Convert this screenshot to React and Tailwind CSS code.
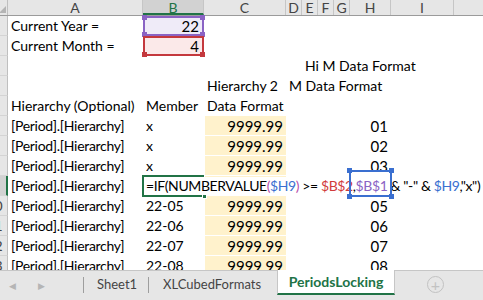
import React from "react";

const FONT = { fontFamily: "Lato, 'Open Sans', sans-serif" };

// column widths A..J (row header is 8px, cut off by the window)
const cols = [
  { key: "A", w: "w-[135px]" },
  { key: "B", w: "w-[61px]" },
  { key: "C", w: "w-[82px]" },
  { key: "D", w: "w-[16px]" },
  { key: "E", w: "w-[16px]" },
  { key: "F", w: "w-[16px]" },
  { key: "G", w: "w-[16px]" },
  { key: "H", w: "w-[41px]" },
  { key: "I", w: "w-[63px]" },
  { key: "J", w: "w-[80px]" },
];

const Handle = ({ className }) => (
  <span className={`absolute w-[5px] h-[5px] ${className}`} />
);

const RowHead = ({ n, active }) => (
  <div
    className={`w-[8px] h-[20px] shrink-0 overflow-hidden flex justify-end border-b border-[#d4d4d4] ${
      active ? "bg-[#d2d2d2] border-r-2 border-r-[#217346]" : "bg-[#e6e6e6] border-r border-r-[#bfbfbf]"
    }`}
  >
    <span className="shrink-0 w-[25px] text-center text-[14px] leading-[20px] text-[#444]">
      {n}
    </span>
  </div>
);

const Yellow = ({ children }) => (
  <div className="w-[82px] h-[20px] shrink-0 bg-[#fff2cc] border-b border-l border-white text-right pr-[3px] leading-[20px] text-[15px]">
    {children}
  </div>
);

const Plain = ({ w, children, right, className = "" }) => (
  <div
    className={`${w} h-[20px] shrink-0 whitespace-nowrap leading-[20px] ${
      right ? "text-right pr-[3px]" : "pl-[3px]"
    } ${className}`}
  >
    {children}
  </div>
);

const DataRow = ({ n, member, code }) => (
  <div className="flex h-[20px]">
    <RowHead n={n} />
    <Plain w="w-[135px]" className="tracking-[-0.3px]">[Period].[Hierarchy]</Plain>
    <Plain w="w-[61px]">{member}</Plain>
    <Yellow>9999.99</Yellow>
    <div className="w-[64px] shrink-0" />
    <Plain w="w-[41px]" right className="text-[15px]">
      {code}
    </Plain>
  </div>
);

export default function App() {
  return (
    <div className="w-[483px] h-[300px] bg-white overflow-hidden text-[14px] text-black" style={FONT}>
      {/* Sheet */}
      <div className="h-[270px] overflow-hidden">
        {/* column headers */}
        <div className="flex h-[16px] border-b border-[#9b9b9b] bg-[#e6e6e6] text-[14px] leading-[15px] text-[#444]">
          <div className="w-[8px] shrink-0 border-r border-[#bfbfbf] relative overflow-hidden">
            <span className="absolute right-[1px] bottom-[2px] w-0 h-0 border-l-[7px] border-l-transparent border-b-[7px] border-b-[#b4b4b4]" />
          </div>
          {cols.map((c) => (
            <div
              key={c.key}
              className={`${c.w} shrink-0 text-center border-r border-[#c6c6c6] ${
                c.key === "B" ? "bg-[#d2d2d2] text-[#217346] border-b-2 border-b-[#217346]" : ""
              }`}
            >
              {c.key}
            </div>
          ))}
        </div>

        {/* row 1 */}
        <div className="flex h-[20px]">
          <RowHead n={1} />
          <Plain w="w-[135px]">Current Year =</Plain>
          <div className="w-[61px] h-[20px] shrink-0 relative bg-[#efebf8] border-2 border-[#8a63c4] text-right pr-[3px] leading-[16px] text-[15px]">
            22
            <Handle className="-left-[3px] -top-[3px] bg-[#8a63c4]" />
            <Handle className="-right-[3px] -top-[3px] bg-[#8a63c4]" />
            <Handle className="-left-[3px] -bottom-[3px] bg-[#8a63c4]" />
            <Handle className="-right-[3px] -bottom-[3px] bg-[#8a63c4]" />
          </div>
        </div>
        {/* row 2 */}
        <div className="flex h-[20px]">
          <RowHead n={2} />
          <Plain w="w-[135px]">Current Month =</Plain>
          <div className="w-[61px] h-[20px] shrink-0 relative bg-[#fbe9e9] border-2 border-[#c4383d] text-right pr-[3px] leading-[16px] text-[15px]">
            4
            <Handle className="-left-[3px] -bottom-[3px] bg-[#c4383d]" />
            <Handle className="-right-[3px] -bottom-[3px] bg-[#c4383d]" />
          </div>
        </div>
        {/* row 3 */}
        <div className="flex h-[20px]">
          <RowHead n={3} />
          <div className="w-[294px] shrink-0" />
          <Plain w="w-[16px]" className="pl-[2px]">Hi M Data Format</Plain>
        </div>
        {/* row 4 */}
        <div className="flex h-[20px]">
          <RowHead n={4} />
          <div className="w-[196px] shrink-0" />
          <Plain w="w-[82px]">Hierarchy 2</Plain>
          <Plain w="w-[16px]" className="pl-[2px]">M Data Format</Plain>
        </div>
        {/* row 5 */}
        <div className="flex h-[20px]">
          <RowHead n={5} />
          <Plain w="w-[135px]">Hierarchy (Optional)</Plain>
          <Plain w="w-[61px]">Member</Plain>
          <Plain w="w-[82px]">Data Format</Plain>
        </div>

        <DataRow n={6} member="x" code="01" />
        <DataRow n={7} member="x" code="02" />
        <DataRow n={8} member="x" code="03" />

        {/* row 9 - cell being edited */}
        <div className="flex h-[20px]">
          <RowHead n={9} active />
          <Plain w="w-[135px]" className="tracking-[-0.3px]">[Period].[Hierarchy]</Plain>
          <div className="w-[61px] h-[20px] shrink-0 relative z-10">
            <span className="absolute -left-[1px] -top-[1px] w-[62px] h-[22px] border-2 border-[#217346]" />
            <span className="absolute right-[-3px] bottom-[-3px] w-[5px] h-[5px] bg-[#217346] border border-white" />
            <span className="absolute left-[1px] top-[1px] h-[18px] bg-white whitespace-nowrap pl-[2px] pr-[4px] leading-[18px] tracking-[-0.4px]">
              =IF(NUMBERVALUE<span className="text-[#b84dab]">(</span>
              <span className="text-[#3a6fd0]">$H9</span>
              <span className="text-[#b84dab]">)</span> &gt;={" "}
              <span className="text-[#d13b3b]">$B$2</span>,
              <span className="text-[#8a63c4]">$B$1</span> &amp; "-" &amp;{" "}
              <span className="text-[#3a6fd0]">$H9</span>,"x")
            </span>
          </div>
          <Yellow />
          <div className="w-[64px] shrink-0" />
          <div className="w-[41px] h-[20px] shrink-0 relative">
            <span className="absolute -left-[1px] -top-[6px] w-[43px] h-[27px] border-2 border-[#3a6fd0] z-20" />
            <Handle className="-left-[3px] -top-[8px] bg-[#3a6fd0] z-20" />
            <Handle className="-right-[3px] -top-[8px] bg-[#3a6fd0] z-20" />
            <Handle className="-left-[3px] -bottom-[3px] bg-[#3a6fd0] z-20" />
            <Handle className="-right-[3px] -bottom-[3px] bg-[#3a6fd0] z-20" />
          </div>
        </div>

        <DataRow n={10} member="22-05" code="05" />
        <DataRow n={11} member="22-06" code="06" />
        <DataRow n={12} member="22-07" code="07" />
        <DataRow n={13} member="22-08" code="08" />
      </div>

      {/* Sheet tabs */}
      <div className="h-[30px] flex bg-[#e6e6e6] border-t border-[#c6c6c6] text-[13px] text-[#444]">
        <div className="w-[83px] shrink-0 flex items-center gap-[22px] pl-[9px] text-[9px] text-[#b5b5b5]">
          <span>◀</span>
          <span>▶</span>
        </div>
        <div className="flex items-center h-[27px]">
          <span className="w-px h-[16px] bg-[#9e9e9e]" />
          <span className="w-[64px] pl-[13px]">Sheet1</span>
          <span className="w-px h-[16px] bg-[#9e9e9e]" />
          <span className="w-[128px] pl-[14px]">XLCubedFormats</span>
        </div>
        <div className="w-[118px] h-[25px] -mt-px bg-white border-x border-[#c6c6c6] border-b-2 border-b-[#217346] flex items-center justify-center font-bold text-[14px] text-[#217346]">
          PeriodsLocking
        </div>
        <div className="flex-1 flex items-start pl-[32px] pt-[5px]">
          <span className="w-[17px] h-[17px] rounded-full border border-[#c2c2c2] flex items-center justify-center text-[#c2c2c2] text-[16px] leading-none">
            +
          </span>
        </div>
      </div>
    </div>
  );
}
